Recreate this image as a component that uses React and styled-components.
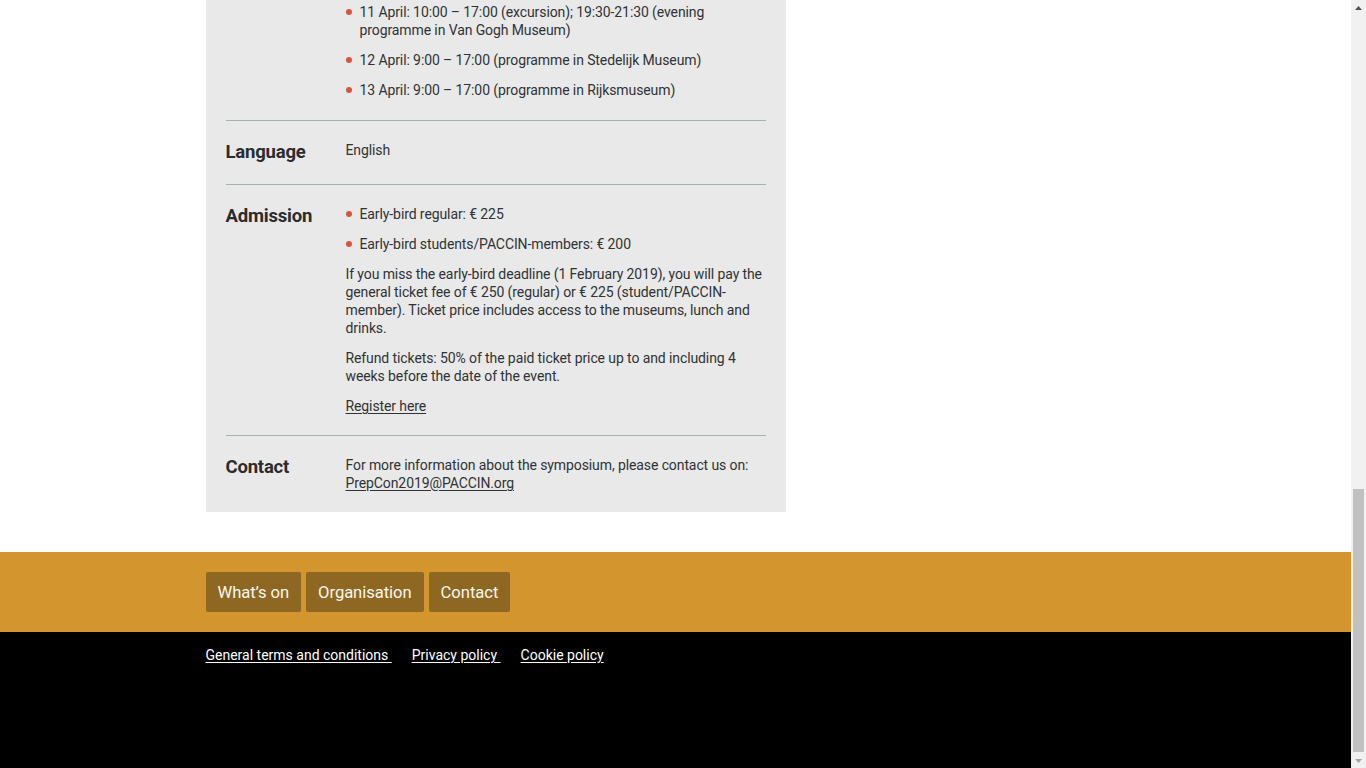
import React from "react"
import styled, { createGlobalStyle } from "styled-components"

const GlobalStyle = createGlobalStyle`
  html, body {
    margin: 0;
    padding: 0;
    height: 768px;
    overflow: hidden;
    background: #fff;
    font-family: Roboto, "Noto Sans", sans-serif;
    color: #2f3335;
  }
`

const Page = styled.div`
  display: flex;
  width: 1366px;
  height: 768px;
`

const Main = styled.div`
  flex: 1;
  display: flex;
  flex-direction: column;
`

const Container = styled.div`
  width: 940px;
  margin: 0 auto;
`

const Panel = styled.section`
  width: 580px;
  background: #e9e9e9;
  padding: 0 20px;
  box-sizing: border-box;
`

const Row = styled.div`
  display: grid;
  grid-template-columns: 120px 1fr;
  padding: ${p => (p.first ? "3px 0 21px" : "20px 0")};
  border-top: ${p => (p.first ? "none" : "1px solid #a7b0b0")};
`

const Label = styled.h3`
  margin: 0;
  font-size: 18.5px;
  line-height: 23px;
  font-weight: 700;
  color: #2a2c2d;
  letter-spacing: -0.2px;
`

const Value = styled.div`
  font-size: 14px;
  line-height: 18px;
  letter-spacing: -0.1px;

  p {
    margin: 0 0 12px;
  }
  p:last-child {
    margin-bottom: 0;
  }
  a {
    color: inherit;
    text-decoration: underline;
    text-underline-offset: 2px;
  }
`

const List = styled.ul`
  list-style: none;
  margin: 0 0 12px;
  padding: 0;

  &:last-child {
    margin-bottom: 0;
  }
`

const Item = styled.li`
  position: relative;
  padding-left: 14px;
  margin-bottom: 12px;

  &:last-child {
    margin-bottom: 0;
  }

  &::before {
    content: "";
    position: absolute;
    left: 0;
    top: 6px;
    width: 6px;
    height: 6px;
    border-radius: 50%;
    background: #d9553b;
  }
`

const Gap = styled.div`
  height: 40px;
`

const NavBand = styled.nav`
  background: #d3962f;
  height: 80px;
  display: flex;
  align-items: center;
`

const NavList = styled.div`
  display: flex;
  gap: 5px;
`

const NavButton = styled.a`
  display: flex;
  align-items: center;
  height: 40px;
  padding: 0 12px;
  background: #8e6722;
  color: #fbf7ee;
  border-radius: 2px;
  font-size: 16.6px;
  letter-spacing: -0.05px;
  text-decoration: none;
`

const LegalBand = styled.footer`
  flex: 1;
  background: #000;
  padding-top: 14px;
`

const LegalLinks = styled.div`
  display: flex;
  gap: 20px;
`

const LegalLink = styled.a`
  color: #fff;
  font-size: 14px;
  line-height: 18px;
  text-decoration: underline;
  text-underline-offset: 2px;
  white-space: pre;
`

const Scrollbar = styled.div`
  width: 15px;
  height: 768px;
  background: #f1f1f1;
  display: flex;
  flex-direction: column;
  align-items: center;
`

const Arrow = styled.div`
  height: 15px;
  display: flex;
  align-items: center;
  justify-content: center;
`

const Track = styled.div`
  flex: 1;
  width: 100%;
  display: flex;
  flex-direction: column;
  justify-content: flex-end;
  align-items: center;
`

const Thumb = styled.div`
  width: 11px;
  height: 263px;
  margin-bottom: 1px;
  background: #c1c1c1;
`

const Triangle = ({ down }) => (
  <svg width="7" height="4" viewBox="0 0 7 4">
    <path d={down ? "M0 0 L7 0 L3.5 4 Z" : "M0 4 L7 4 L3.5 0 Z"} fill={down ? "#a3a3a3" : "#505050"} />
  </svg>
)

const App = () => {
  return (
    <>
      <GlobalStyle />
      <Page>
        <Main>
          <Container>
            <Panel>
              <Row first>
                <div />
                <Value>
                  <List>
                    <Item>11 April: 10:00 – 17:00 (excursion); 19:30-21:30 (evening programme in Van Gogh Museum)</Item>
                    <Item>12 April: 9:00 – 17:00 (programme in Stedelijk Museum)</Item>
                    <Item>13 April: 9:00 – 17:00 (programme in Rijksmuseum)</Item>
                  </List>
                </Value>
              </Row>
              <Row>
                <Label>Language</Label>
                <Value>
                  <p>English</p>
                </Value>
              </Row>
              <Row>
                <Label>Admission</Label>
                <Value>
                  <List>
                    <Item>Early-bird regular: € 225</Item>
                    <Item>Early-bird students/PACCIN-members: € 200</Item>
                  </List>
                  <p>
                    If you miss the early-bird deadline (1 February 2019), you will pay the general ticket fee of € 250
                    (regular) or € 225 (student/PACCIN-member). Ticket price includes access to the museums, lunch and
                    drinks.
                  </p>
                  <p>Refund tickets: 50% of the paid ticket price up to and including 4 weeks before the date of the event.</p>
                  <p>
                    <a href="#register">Register here</a>
                  </p>
                </Value>
              </Row>
              <Row>
                <Label>Contact</Label>
                <Value>
                  <p>
                    For more information about the symposium, please contact us on:{" "}
                    <a href="#mail">PrepCon2019@PACCIN.org</a>
                  </p>
                </Value>
              </Row>
            </Panel>
          </Container>
          <Gap />
          <NavBand>
            <Container>
              <NavList>
                <NavButton href="#whatson">What’s on</NavButton>
                <NavButton href="#organisation">Organisation</NavButton>
                <NavButton href="#contact">Contact</NavButton>
              </NavList>
            </Container>
          </NavBand>
          <LegalBand>
            <Container>
              <LegalLinks>
                <LegalLink href="#terms">General terms and conditions </LegalLink>
                <LegalLink href="#privacy">Privacy policy </LegalLink>
                <LegalLink href="#cookies">Cookie policy</LegalLink>
              </LegalLinks>
            </Container>
          </LegalBand>
        </Main>
        <Scrollbar>
          <Arrow>
            <Triangle />
          </Arrow>
          <Track>
            <Thumb />
          </Track>
          <Arrow>
            <Triangle down />
          </Arrow>
        </Scrollbar>
      </Page>
    </>
  )
}

export default App
